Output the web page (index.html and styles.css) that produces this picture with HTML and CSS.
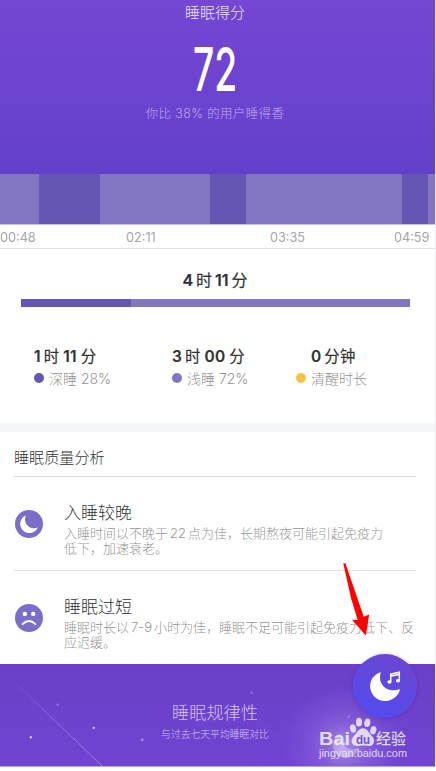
FILE: index.html
```html
<!DOCTYPE html>
<html lang="zh-CN">
<head>
<meta charset="utf-8">
<title>睡眠得分</title>
<link rel="stylesheet" href="styles.css">
</head>
<body>
<main class="screen">
  <header class="score">
    <h1 class="score-title">睡眠得分</h1>
    <div class="score-value">72</div>
    <p class="score-note">你比 38% 的用户睡得香</p>
  </header>

  <div class="timeline">
    <i class="light s1"></i><i class="deep s2"></i><i class="light s3"></i><i class="deep s4"></i><i class="light s5"></i><i class="deep s6"></i><i class="light s7"></i>
  </div>
  <div class="hours"><span>00:48</span><span>02:11</span><span>03:35</span><span>04:59</span></div>

  <section class="summary">
    <div class="total"><b>4</b>时<b>11</b>分</div>
    <div class="ratio"><i class="deep"></i></div>
    <div class="stats">
      <div class="stat"><div class="amount"><b>1</b>时<b>11</b>分</div><div class="label"><i class="dot deep"></i>深睡 28%</div></div>
      <div class="stat"><div class="amount"><b>3</b>时<b>00</b>分</div><div class="label"><i class="dot light"></i>浅睡 72%</div></div>
      <div class="stat"><div class="amount"><b>0</b>分钟</div><div class="label"><i class="dot awake"></i>清醒时长</div></div>
    </div>
  </section>

  <section class="analysis">
    <h2 class="analysis-title">睡眠质量分析</h2>
    <article class="advice">
      <svg class="advice-icon" viewBox="0 0 28 28"><circle cx="14" cy="14" r="14" fill="#7b6ec9"/><path d="M10.8 5.4A9.2 9.2 0 1 0 22.8 17.6C15.5 20.8 7.4 13.5 10.8 5.4Z" fill="#fff"/></svg>
      <div class="advice-body"><h3>入睡较晚</h3><p>入睡时间以不晚于<span class="num">22</span>点为佳，长期熬夜可能引起免疫力<br>低下，加速衰老。</p></div>
    </article>
    <article class="advice">
      <svg class="advice-icon" viewBox="0 0 28 28"><circle cx="14" cy="14" r="14" fill="#7b6ec9"/><circle cx="9.8" cy="9.9" r="2.2" fill="#fff"/><circle cx="18.2" cy="9.9" r="2.2" fill="#fff"/><path d="M7.6 20.2Q14 13.9 20.4 20.2" fill="none" stroke="#fff" stroke-width="1.8" stroke-linecap="round"/></svg>
      <div class="advice-body"><h3>睡眠过短</h3><p>睡眠时长以<span class="num">7-9</span>小时为佳，睡眠不足可能引起免疫力低下、反<br>应迟缓。</p></div>
    </article>
  </section>

  <footer class="regularity">
    <svg class="sky" viewBox="0 0 435 103">
      <defs>
        <linearGradient id="trail" x1="0" y1="0" x2="1" y2="1"><stop stop-color="#fff" stop-opacity="0"/><stop offset="1" stop-color="#c8a8ff" stop-opacity=".5"/></linearGradient>
        <radialGradient id="glow"><stop stop-color="#fff" stop-opacity=".4"/><stop offset=".4" stop-color="#d5b8ff" stop-opacity=".2"/><stop offset="1" stop-color="#a080f0" stop-opacity="0"/></radialGradient>
      </defs>
      <circle cx="345" cy="82" r="62" fill="url(#glow)"/>
      <path d="M5 11L101 103" stroke="url(#trail)"/>
      <path d="M260 56L309 103" stroke="#a98af0" stroke-opacity=".12"/>
      <path d="M342 70A13 13 0 1 0 360 84A12 12 0 0 1 342 70Z" fill="#fff" opacity=".3"/>
      <g fill="#dcc9ff"><circle cx="29" cy="74" r="1.2"/><circle cx="92.5" cy="64.5" r="1.2"/><circle cx="141.5" cy="76.5" r="1.3" opacity=".6"/><circle cx="56" cy="41" r="1.2" opacity=".35"/><circle cx="252" cy="29" r="1.2" opacity=".35"/><circle cx="350" cy="53" r="1.2" opacity=".35"/></g>
    </svg>
    <h2>睡眠规律性</h2>
    <p>与过去七天平均睡眠对比</p>
  </footer>

  <div class="music-button">
    <svg viewBox="0 0 64 64"><path d="M28 17.9C20 20.5 15.5 28 17.7 36C20 44.5 28 48.6 36 46.4C41.6 44.8 46.3 40.5 46.9 35C35 40 23.5 30 28 17.9Z" fill="#fff"/><path d="M37.7 28V20.2L46.3 18.3V26.7M37.7 22.2L46.3 20.3" fill="none" stroke="#fff" stroke-width="1.5"/><ellipse cx="36.4" cy="28" rx="2" ry="1.7" fill="#fff"/><ellipse cx="45" cy="26.7" rx="2" ry="1.7" fill="#fff"/></svg>
  </div>
  <svg class="pointer" viewBox="0 0 27 73"><path d="M.3 .5L2.4 .3L20.8 53.8L26.2 51.4L22.8 72.4L9 56.8L14.7 57L8 35Z" fill="#f00"/></svg>
  <svg class="watermark" viewBox="0 0 92 47">
    <g fill="#fff">
      <text class="mark-latin" x="1" y="27.5" textLength="31" lengthAdjust="spacingAndGlyphs">Bai</text>
      <ellipse cx="35" cy="11.5" rx="3" ry="4.2" transform="rotate(-12 35 11.5)"/>
      <ellipse cx="41" cy="5.2" rx="3" ry="4.4"/>
      <ellipse cx="49.3" cy="5.7" rx="3" ry="4.3" transform="rotate(10 49.3 5.7)"/>
      <ellipse cx="55.3" cy="13.3" rx="3" ry="4.2" transform="rotate(15 55.3 13.3)"/>
      <path d="M45 11.3C49.5 11.3 50.5 15.5 54.2 19.5C58.5 24 55 29.8 50.5 29C47 28.4 43.5 28.4 40 29C35 29.8 31 24.5 35.5 19.5C39 16 40.5 11.3 45 11.3Z"/>
      <text class="mark-cn" x="58" y="27" textLength="30" lengthAdjust="spacingAndGlyphs">经验</text>
      <text class="mark-url" x="1" y="40" textLength="88" lengthAdjust="spacingAndGlyphs">jingyan.baidu.com</text>
    </g>
    <text class="mark-du" x="38" y="26.5" textLength="14" lengthAdjust="spacingAndGlyphs">du</text>
  </svg>
</main>
</body>
</html>
```
FILE: styles.css
```css
* { box-sizing: border-box; margin: 0; padding: 0; }

body {
  width: 436px;
  height: 771px;
  overflow: hidden;
  background: #fff;
  color: #333;
  font-family: Inter, "Noto Sans CJK SC", sans-serif;
}

h1, h2, h3 { font-weight: 300; }
i { display: block; }
p { font-weight: 300; }

.screen {
  position: relative;
  width: 436px;
  height: 767px;
  border-right: 1px solid #ececf0;
}

.deep { background: #6556b4; }
.light { background: #8275c1; }
.awake { background: #f5c242; }

.score {
  height: 174px;
  padding-right: 5px;
  background: linear-gradient(#7547d3, #6340cb);
  color: #fff;
  text-align: center;
}
.score-title {
  padding-top: 2px;
  font-size: 15px;
  line-height: 22px;
  opacity: .85;
}
.score-value {
  height: 70px;
  margin-top: 10px;
  font-size: 60px;
  font-weight: 500;
  line-height: 70px;
  transform: scaleX(.62);
}
.score-note {
  font-size: 12.5px;
  line-height: 18px;
  letter-spacing: .35px;
  color: #beabeb;
  margin-top: 1px;
}

.timeline {
  display: flex;
  height: 51px;
  border-bottom: 1px solid #c9c2ea;
}
.s1 { width: 39px; }
.s2 { width: 61px; }
.s3 { width: 110px; }
.s4 { width: 36px; }
.s5 { width: 156px; }
.s6 { width: 26px; }
.s7 { flex: 1; }

.hours {
  display: grid;
  grid-template-columns: 126px 144px 124px 1fr;
  height: 24px;
  border-bottom: 1px solid #e2e2e5;
  font-size: 12.7px;
  line-height: 25px;
  color: #a5a5a5;
}

.summary {
  height: 183px;
  padding: 20px 25px 0 21px;
  border-bottom: 9px solid #f5f6fa;
}
.total {
  height: 22px;
  padding-right: 1px;
  font-size: 16px;
  line-height: 22px;
  text-align: center;
}
.total b, .amount b { font-weight: 600; }
.total b:first-child { margin-right: 3px; }
.total b + b { margin: 0 3px; }
.total, .amount { -webkit-text-stroke: .2px currentColor; }
.ratio {
  height: 8px;
  margin-top: 8px;
  background: #8275c1;
}
.ratio i { width: 110px; height: 8px; }
.stats {
  display: grid;
  grid-template-columns: 138px 124px 1fr;
  padding: 38px 0 0 13px;
}
.amount { font-size: 15.4px; line-height: 23px; height: 22px; letter-spacing: .2px; }
.amount b:first-child { margin-right: 3px; }
.amount b + b { margin: 0 4px; }
.stat:last-child .amount { padding-left: 15px; }
.label {
  display: flex;
  align-items: center;
  gap: 5px;
  height: 24px;
  font-size: 14px;
  font-weight: 300;
  line-height: 26px;
  color: #929292;
}
.dot { width: 10px; height: 10px; margin-top: -2px; border-radius: 50%; }

.analysis { height: 232px; padding: 0 19px 0 14px; }
.analysis-title {
  height: 45px;
  padding-top: 15px;
  border-bottom: 1px solid #dedee0;
  font-size: 15.1px;
  line-height: 22px;
}
.advice {
  display: flex;
  height: 94px;
  padding-top: 24px;
  border-bottom: 1px solid #e2e2e2;
}
.advice-icon { width: 28px; height: 28px; margin: 9px 21px 0 1px; }
.advice-body { white-space: nowrap; }
.advice h3 { font-size: 17px; line-height: 25px; }
.advice p {
  font-size: 13px;
  line-height: 15px;
  color: #969696;
}
.num { margin: 0 2px; }

.regularity {
  position: relative;
  height: 103px;
  padding: 37px 5px 0 0;
  background: linear-gradient(#6a40c6, #6f44d3);
  border-bottom: 1px solid #b7a2e8;
  color: #d2c4f1;
  text-align: center;
}
.regularity h2 { font-size: 17.2px; line-height: 24px; }
.regularity p { font-size: 9.8px; line-height: 20px; }
.sky { position: absolute; left: 0; top: 0; width: 435px; height: 102px; }

.music-button {
  position: absolute;
  left: 353px;
  top: 654px;
  width: 64px;
  height: 64px;
  border-radius: 50%;
  background: linear-gradient(25deg, #544bf0 15%, #6b46cf 90%);
  box-shadow: 0 1px 4px #41288a66;
}
.music-button svg { display: block; width: 64px; height: 64px; }
.pointer { position: absolute; left: 343px; top: 563px; width: 27px; height: 73px; }
.watermark { position: absolute; left: 318px; top: 717px; width: 92px; height: 47px; opacity: .76; }
.mark-latin { font: 700 19px "Liberation Sans", sans-serif; }
.mark-cn { font: 500 15px "Noto Sans CJK SC", sans-serif; }
.mark-url { font: 500 10px "Liberation Sans", sans-serif; }
.mark-du { font: 700 12px Inter, sans-serif; fill: #7551cf; }
```
